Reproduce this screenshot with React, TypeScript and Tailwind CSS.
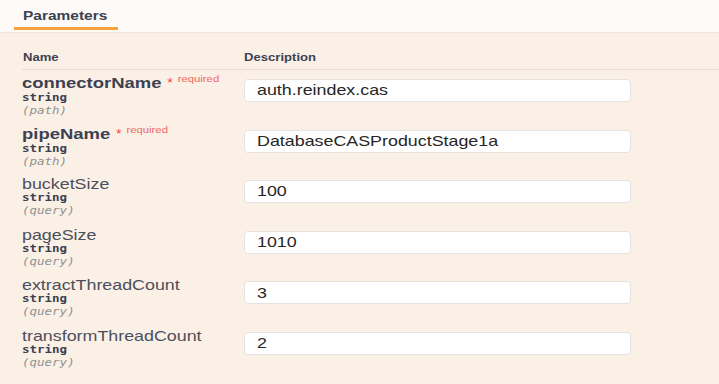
import React from 'react';

interface Param {
  name: string;
  type: string;
  location: string;
  required?: boolean;
  value: string;
}

const params: Param[] = [
  { name: 'connectorName', type: 'string', location: '(path)', required: true, value: 'auth.reindex.cas' },
  { name: 'pipeName', type: 'string', location: '(path)', required: true, value: 'DatabaseCASProductStage1a' },
  { name: 'bucketSize', type: 'string', location: '(query)', value: '100' },
  { name: 'pageSize', type: 'string', location: '(query)', value: '1010' },
  { name: 'extractThreadCount', type: 'string', location: '(query)', value: '3' },
  { name: 'transformThreadCount', type: 'string', location: '(query)', value: '2' },
];

// the screenshot is stretched sideways, so text blocks get a 1.2 horizontal scale
const stretch = 'origin-left scale-x-[1.19]';

const ParamRow: React.FC<{ p: Param }> = ({ p }) => (
  <div className="flex h-[50.6px]">
    <div className="w-[222px] pt-[5px]">
      <div className={stretch}>
        <div className="flex items-start text-[#3b4151] leading-[15px]">
          <span className={p.required ? 'text-[15.5px] font-bold' : 'text-[15px] text-[#4b4f5a]'}>{p.name}</span>
          {p.required && (
            <>
              <span className="ml-[5px] text-[12px] text-[#f93e3e] leading-[16px]">*</span>
              <span className="ml-[4px] text-[9.5px] text-[#f06868] leading-[12px] -mt-[2px]">required</span>
            </>
          )}
        </div>
        <div className="font-['DejaVu_Sans_Mono',monospace] text-[10.5px] font-bold text-[#3b4151] leading-[13px]">
          {p.type}
        </div>
        <div className="font-['DejaVu_Sans_Mono',monospace] text-[10.5px] italic text-[#909090] leading-[13px]">
          {p.location}
        </div>
      </div>
    </div>
    <div className="pt-[9px]">
      <div className="w-[387px] h-[23px] rounded-[4px] border border-[#e6e2de] bg-white pl-[12px] flex items-center text-[15px] text-[#262626]">
        <span className={stretch}>{p.value}</span>
      </div>
    </div>
  </div>
);

export default function App() {
  return (
    <div className="w-[719px] h-[384px] overflow-hidden bg-[#fbf0e6] font-['Liberation_Sans',Arial,sans-serif]">
      <div className="h-[33px] bg-[#fdfaf7] border-b border-[#efe4d9] pl-[14px]">
        <div className="w-[104px] h-[30px] border-b-[3px] border-[#f5a33c] pl-[9px] pt-[8px] text-[13px] font-bold text-[#3b4151] leading-[15px]">
          <div className={stretch}>Parameters</div>
        </div>
      </div>
      <div className="pl-[22px]">
        <div className="flex h-[37px] items-end pb-[5px] border-b border-[#e9dcd0] text-[11px] leading-[14px] font-bold text-[#3b4151]">
          <div className="w-[222px] pl-[1px]">
            <div className={stretch}>Name</div>
          </div>
          <div className={stretch}>Description</div>
        </div>
        {params.map((p) => (
          <ParamRow key={p.name} p={p} />
        ))}
      </div>
    </div>
  );
}
